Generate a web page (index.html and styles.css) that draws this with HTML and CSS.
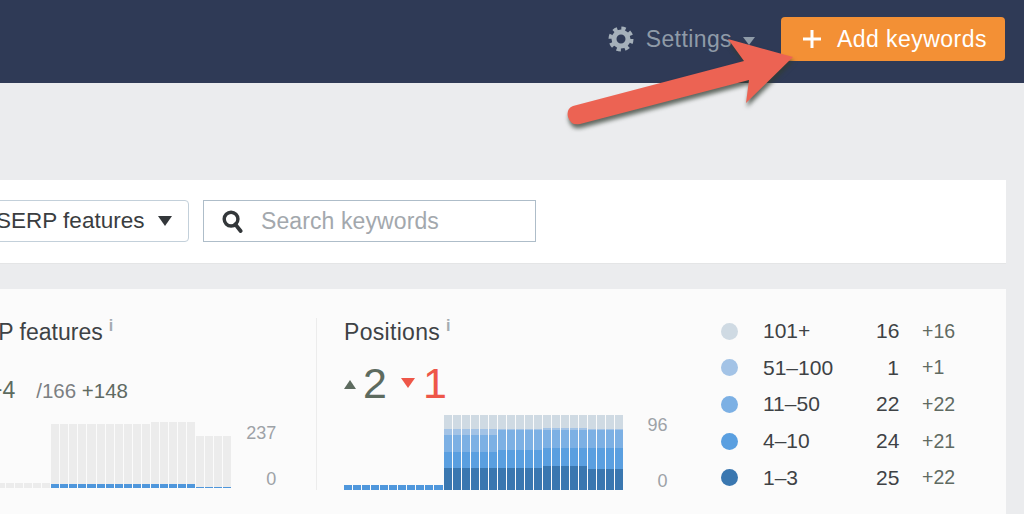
FILE: index.html
```html
<!DOCTYPE html>
<html lang="en">

<head>
    <meta charset="UTF-8">
    <meta name="viewport" content="width=device-width, initial-scale=1.0">
    <title>Rank tracker</title>
    <link rel="stylesheet" href="styles.css">
</head>

<body>
    <header class="Topbar">
        <a class="Settings">
            <svg class="Gear" viewBox="0 0 26 26">
                <circle cx="13" cy="13" r="7" fill="none" stroke="currentColor" stroke-width="5"></circle>
                <circle cx="13" cy="13" r="10.5" fill="none" stroke="currentColor" stroke-width="4" stroke-dasharray="4.25 4"></circle>
            </svg>
            <span>Settings</span>
            <i class="Caret"></i>
        </a>
        <button class="AddBtn">
            <svg class="Plus" viewBox="0 0 18 18">
                <path d="M9 0V18M0 9H18" stroke="#fff" stroke-width="3"></path>
            </svg>
            <span>Add keywords</span>
        </button>
    </header>

    <main class="Content">
        <section class="Toolbar">
            <button class="FilterBtn">SERP features <i class="FilterCaret"></i></button>
            <label class="SearchBox">
                <svg class="SearchIcon" viewBox="0 0 22 24">
                    <circle cx="9.5" cy="9.5" r="7.2" fill="none" stroke="#33373a" stroke-width="3.6"></circle>
                    <path d="M14 15L19.5 22" stroke="#33373a" stroke-width="4" stroke-linecap="round"></path>
                </svg>
                <span class="Placeholder">Search keywords</span>
            </label>
        </section>

        <section class="Stats">
            <div class="Block BlockSerp">
                <h3 class="BlockTitle">SERP features<sup>i</sup></h3>
                <p class="SerpNums"><span class="Lead">+4</span><span class="Total">/166</span> <span class="Delta">+148</span></p>
                <div class="ChartRow">
                    <div class="Bars" id="serpBars"></div>
                    <div class="Axis"><span>237</span><span>0</span></div>
                </div>
            </div>

            <div class="Block BlockPos">
                <h3 class="BlockTitle">Positions<sup>i</sup></h3>
                <p class="PosNums">
                    <i class="TriUp"></i><span class="Up">2</span>
                    <i class="TriDown"></i><span class="Down">1</span>
                </p>
                <div class="ChartRow">
                    <div class="Bars" id="posBars"></div>
                    <div class="Axis"><span>96</span><span>0</span></div>
                </div>
            </div>

            <ul class="Legend">
                <li><i class="Dot C1"></i><span class="Range">101+</span><span class="Count">16</span><span class="Change">+16</span></li>
                <li><i class="Dot C2"></i><span class="Range">51–100</span><span class="Count">1</span><span class="Change">+1</span></li>
                <li><i class="Dot C3"></i><span class="Range">11–50</span><span class="Count">22</span><span class="Change">+22</span></li>
                <li><i class="Dot C4"></i><span class="Range">4–10</span><span class="Count">24</span><span class="Change">+21</span></li>
                <li><i class="Dot C5"></i><span class="Range">1–3</span><span class="Count">25</span><span class="Change">+22</span></li>
            </ul>
        </section>
    </main>

    <svg class="Arrow" viewBox="0 0 240 100">
        <path d="M10 74L181 29L165 7L230 25L183 71L186 48L17 92Q8 94 5 85Q3 77 10 74Z" fill="#ec6353"></path>
    </svg>

    <script src="script.js"></script>
</body>

</html>
```

FILE: styles.css
```css
* {
    box-sizing: border-box;
}

html,
body {
    height: 514px;
    overflow: hidden;
}

body {
    margin: 0;
    position: relative;
    background-color: #ebecee;
    font-family: "Liberation Sans", Arial, sans-serif;
    color: #3e4245;
}

.Topbar {
    height: 83px;
    padding: 17px 19px 0 0;
    display: flex;
    justify-content: flex-end;
    align-items: flex-start;
    background-color: #2f3a56;
}

.Settings {
    height: 44px;
    margin-right: 26px;
    display: flex;
    align-items: center;
    color: #8f9ba8;
    font-size: 23px;
    letter-spacing: 0.4px;
}

.Gear {
    width: 26px;
    height: 26px;
    margin-right: 12px;
    color: #a5b0ba;
}

.Caret {
    margin: 3px 0 0 11px;
    border-top: 8px solid #8f9ba8;
    border-left: 6.5px solid transparent;
    border-right: 6.5px solid transparent;
}

.AddBtn {
    width: 224px;
    height: 44px;
    padding: 0 0 0 22px;
    display: flex;
    align-items: center;
    background-color: #f39035;
    border: none;
    border-radius: 4px;
    color: #fff;
    font-family: inherit;
    font-size: 23px;
    letter-spacing: 0.45px;
}

.Plus {
    width: 18px;
    height: 18px;
    margin-right: 16px;
}

.Content {
    padding: 97px 18px 0 0;
}

.Toolbar {
    height: 84px;
    padding-bottom: 1px;
    display: flex;
    align-items: center;
    background-color: #fff;
    border-bottom: 1px solid #e4e5e6;
}

.FilterBtn {
    width: 209px;
    height: 42px;
    margin-left: -20px;
    padding: 0 16px 0 15px;
    display: flex;
    justify-content: space-between;
    align-items: center;
    background-color: #fff;
    border: 1px solid #c3d0da;
    border-radius: 4px;
    color: #3a3d40;
    font-family: inherit;
    font-size: 22.5px;
}

.FilterCaret {
    border-top: 10px solid #33373a;
    border-left: 7px solid transparent;
    border-right: 7px solid transparent;
}

.SearchBox {
    width: 333px;
    height: 42px;
    margin-left: 14px;
    padding-left: 18px;
    display: flex;
    align-items: center;
    border: 1px solid #aebdc9;
}

.SearchIcon {
    width: 21px;
    height: 23px;
    margin-right: 18px;
}

.Placeholder {
    color: #a3a8ad;
    font-size: 23px;
    letter-spacing: 0.1px;
}

.Stats {
    height: 225px;
    margin-top: 25px;
    padding-top: 29px;
    display: flex;
    background-color: #fbfbfb;
}

.Block {
    height: 172px;
    position: relative;
}

.BlockSerp {
    width: 317px;
    border-right: 1px solid #ececec;
}

.BlockPos {
    width: 377px;
    padding-left: 27px;
}

.BlockTitle {
    margin: 0;
    font-size: 23px;
    font-weight: normal;
    line-height: 28px;
}

.BlockSerp .BlockTitle {
    margin-left: -49px;
}

.BlockPos .BlockTitle {
    letter-spacing: 0.3px;
}

.BlockTitle sup {
    margin-left: 6px;
    color: #a4abb1;
    font-size: 16px;
    font-weight: bold;
    line-height: 0;
}

.SerpNums {
    height: 30px;
    margin: 29px 0 0 -11px;
    font-size: 20.5px;
    line-height: 30px;
    white-space: nowrap;
}

.Lead {
    margin-right: 21px;
    color: #5d6b5f;
    font-size: 23px;
}

.Total {
    color: #7b7f82;
}

.Delta {
    color: #5f6a62;
}

.ChartRow {
    display: flex;
    align-items: flex-end;
}

.BlockSerp .ChartRow {
    height: 68px;
    margin: 15px 0 0 -3px;
}

.BlockPos .ChartRow {
    height: 76px;
    margin-top: 7px;
}

.Bars {
    height: 100%;
    display: flex;
    align-items: flex-end;
}

.Bar {
    width: 9.05px;
    padding-right: 1px;
    display: flex;
    flex-direction: column;
}

.Seg {
    display: block;
}

.Axis {
    width: 44px;
    display: flex;
    flex-direction: column;
    justify-content: space-between;
    align-items: flex-end;
    color: #9da2a7;
    font-size: 18px;
    line-height: 20px;
}

.BlockSerp .Axis {
    height: 66px;
    margin-bottom: -1px;
}

.BlockPos .Axis {
    width: 43px;
    height: 76px;
    margin-bottom: -1px;
}

.PosNums {
    height: 48px;
    margin: 13px 0 0;
    display: flex;
    align-items: center;
    font-size: 43px;
    line-height: 48px;
}

.TriUp {
    margin: 3px 7px 0 0;
    border-bottom: 9px solid #5d6b5f;
    border-left: 6.5px solid transparent;
    border-right: 6.5px solid transparent;
}

.Up {
    color: #5d6b5f;
}

.TriDown {
    margin: 0 8px 0 14px;
    border-top: 10px solid #ee5648;
    border-left: 7px solid transparent;
    border-right: 7px solid transparent;
}

.Down {
    color: #ee5648;
}

.Legend {
    margin: -5px 0 0 27px;
    padding: 0;
    list-style: none;
}

.Legend li {
    height: 36.6px;
    display: flex;
    align-items: center;
    font-size: 21px;
}

.Dot {
    width: 17px;
    height: 17px;
    margin-right: 25px;
    border-radius: 50%;
}

.C1 {
    background-color: #cfdae3;
}

.C2 {
    background-color: #a3c3e6;
}

.C3 {
    background-color: #7cb0e4;
}

.C4 {
    background-color: #5a9fe0;
}

.C5 {
    background-color: #3a77b0;
}

.Range {
    width: 113px;
}

.Count {
    width: 23px;
    text-align: right;
}

.Change {
    margin-left: 23px;
    color: #5f6a62;
    font-size: 19.5px;
}

.Arrow {
    width: 240px;
    height: 100px;
    position: absolute;
    left: 563px;
    top: 32px;
    filter: drop-shadow(1px 4px 2px rgba(50, 60, 50, 0.75));
}
```

FILE: script.js
```js
// heights are in px, top segment first
const GREY = '#ececec', BLUE = '#4f97dc';
const C1 = '#cfdae3', C2 = '#a3c3e6', C3 = '#7cb0e4', C4 = '#5a9fe0', C5 = '#3a77b0';

function drawBars(el, data) {
    data.forEach(segs => {
        const bar = document.createElement('div');
        bar.className = 'Bar';
        segs.forEach(s => {
            const seg = document.createElement('span');
            seg.className = 'Seg';
            seg.style.height = s[0] + 'px';
            seg.style.backgroundColor = s[1];
            bar.appendChild(seg);
        });
        el.appendChild(bar);
    });
}

const serp = [];
for (let i = 0; i < 6; i++) serp.push([[5, GREY]]);
for (let i = 0; i < 11; i++) serp.push([[60, GREY], [4, BLUE]]);
for (let i = 0; i < 5; i++) serp.push([[62, GREY], [4, BLUE]]);
for (let i = 0; i < 4; i++) serp.push([[51, GREY], [1, BLUE]]);
drawBars(document.getElementById('serpBars'), serp);

const pos = [];
for (let i = 0; i < 11; i++) pos.push([[5, BLUE]]);
for (let i = 0; i < 6; i++) pos.push([[14, C1], [6, C2], [17, C3], [16, C4], [22, C5]]);
for (let i = 0; i < 5; i++) pos.push([[14, C1], [1, C2], [20, C3], [18, C4], [22, C5]]);
for (let i = 0; i < 5; i++) pos.push([[13, C1], [2, C2], [18, C3], [18, C4], [24, C5]]);
for (let i = 0; i < 4; i++) pos.push([[14, C1], [1, C2], [18, C3], [21, C4], [21, C5]]);
drawBars(document.getElementById('posBars'), pos);
```
